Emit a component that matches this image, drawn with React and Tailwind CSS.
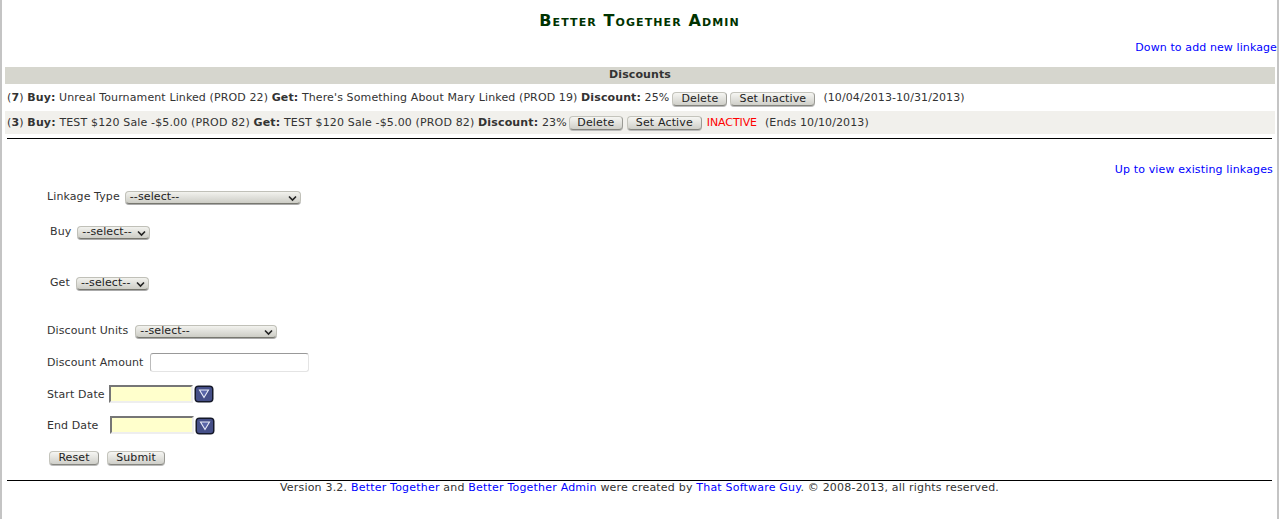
const BTN =
  'inline-block h-[14px] rounded-[4px] border border-[#c4c4bc] border-b-[#85857f] border-r-[#9a9a94] bg-gradient-to-b from-[#f6f6f3] to-[#cfcfc9] text-[11px] leading-[12px] text-[#222] text-center shadow-[0_1px_0_#bbb]';

function Btn({ w, children, className = '' }) {
  return <span className={`${BTN} ${w} ${className}`}>{children}</span>;
}

function Select({ w, children = '--select--' }) {
  return (
    <span className={`relative inline-block h-[13px] ${w} rounded-[4px] border border-[#c0c0b8] border-b-[#77776f] bg-gradient-to-b from-[#f2f2ee] to-[#cdcdc6] pl-[4px] text-[11px] leading-[10px] text-[#222] shadow-[0_1px_0_#aaa]`}>
      {children}
      <svg className="absolute right-[3px] top-[3px]" width="9" height="7" viewBox="0 0 9 7">
        <path d="M1 1.5 L4.5 5 L8 1.5" fill="none" stroke="#222" strokeWidth="1.6" />
      </svg>
    </span>
  );
}

function CalIcon() {
  return (
    <svg width="20" height="18" viewBox="0 0 20 18">
      <rect x="0.5" y="0.5" width="19" height="17" rx="4" fill="#141828" />
      <rect x="2" y="2" width="16" height="14" rx="2" fill="#454f88" />
      <path d="M5.5 5 H14.5 L10 12.5 Z" fill="#5a66a8" stroke="#e8ecf8" strokeWidth="1.1" />
    </svg>
  );
}

function DateBox({ className = '' }) {
  return <span className={`mr-[1px] inline-block h-[18px] w-[84px] border-2 border-[#767676] border-r-[#eeeeee] border-b-[#eeeeee] bg-[#ffffcc] ${className}`} />;
}

export default function App() {
  return (
    <div className="h-[519px] w-[1279px] overflow-hidden border-x-[2px] border-x-[#c4c4c4] bg-white font-['DejaVu_Sans',sans-serif] text-[11px] tracking-[0.1px] text-[#333]">
      <h1 className="pt-[11px] text-center text-[16px] leading-[20px] font-bold tracking-[1.1px] text-[#003300] [font-variant:small-caps]">
        Better Together Admin
      </h1>

      <div className="mt-[7px] h-[29px] pt-[3px] text-right leading-[14px]">
        <a className="text-[#0000ff]">Down to add new linkage</a>
      </div>

      <div className="ml-[3px] mr-[2px]">
        <div className="h-[17px] bg-[#d6d6ce] text-center font-bold leading-[16px]">Discounts</div>
        <div className="flex h-[27px] items-center pl-[2px] pt-[2px] tracking-[0.115px] whitespace-pre">
          (<b>7</b>) <b>Buy:</b> Unreal Tournament Linked (PROD 22) <b>Get:</b> There's Something About Mary Linked (PROD 19) <b>Discount:</b> 25%
          <Btn w="w-[55px]" className="ml-[3px]">Delete</Btn>
          <Btn w="w-[85px]" className="ml-[3px]">Set Inactive</Btn>
          <span className="ml-[8px] tracking-[0.08px]">(10/04/2013-10/31/2013)</span>
        </div>
        <div className="flex h-[23px] items-center bg-[#f1f0ec] pl-[2px] pt-[1px] tracking-[0.15px] whitespace-pre">
          (<b>3</b>) <b>Buy:</b> TEST $120 Sale -$5.00 (PROD 82) <b>Get:</b> TEST $120 Sale -$5.00 (PROD 82) <b>Discount:</b> 23%
          <Btn w="w-[54px]" className="ml-[2px]">Delete</Btn>
          <Btn w="w-[75px]" className="ml-[4px]">Set Active</Btn>
          <span className="ml-[5px] tracking-[-0.1px] text-[#ff0000]">INACTIVE</span>
          <span className="ml-[8px] tracking-[0.1px]">(Ends 10/10/2013)</span>
        </div>
      </div>

      <hr className="mx-[5px] mt-[4px] border-t border-black" />

      <div className="mt-[24px] mr-[4px] text-right leading-[14px] tracking-[0.15px]">
        <a className="text-[#0000ff]">Up to view existing linkages</a>
      </div>

      <div className="mt-[12px] pl-[45px]">
        <div className="flex h-[16px] items-center gap-[5px]">
          <span>Linkage Type</span>
          <Select w="w-[176px]" />
        </div>
        <div className="mt-[19px] flex h-[16px] items-center gap-[6px] pl-[3px]">
          <span>Buy</span>
          <Select w="w-[73px]" />
        </div>
        <div className="mt-[35px] flex h-[16px] items-center gap-[6px] pl-[3px]">
          <span>Get</span>
          <Select w="w-[73px]" />
        </div>
        <div className="mt-[32px] flex h-[16px] items-center gap-[7px]">
          <span>Discount Units</span>
          <Select w="w-[142px]" />
        </div>
        <div className="mt-[14px] flex h-[19px] items-center gap-[6px]">
          <span className="pt-[1px]">Discount Amount</span>
          <span className="h-[19px] w-[159px] rounded-[3px] border border-[#e4e4e4] border-t-[#999] border-l-[#bbb] bg-white" />
        </div>
        <div className="mt-[13px] flex h-[18px] items-center">
          <span className="mr-[4px] pt-[2px]">Start Date</span>
          <DateBox />
          <CalIcon />
        </div>
        <div className="mt-[13px] flex h-[19px] items-end">
          <span className="mr-[11px] self-center pt-[2px]">End Date</span>
          <DateBox className="self-start" />
          <CalIcon />
        </div>
        <div className="mt-[16px] flex gap-[8px] pl-[2px]">
          <Btn w="w-[50px]">Reset</Btn>
          <Btn w="w-[58px]">Submit</Btn>
        </div>
      </div>

      <hr className="mx-[5px] mt-[15px] border-t border-black" />
      <div className="text-center leading-[14px] tracking-[0.2px]">
        Version 3.2. <a className="text-[#0000ff]">Better Together</a> and <a className="text-[#0000ff]">Better Together Admin</a> were created by <a className="text-[#0000ff]">That Software Guy</a>. © 2008-2013, all rights reserved.
      </div>
    </div>
  );
}
